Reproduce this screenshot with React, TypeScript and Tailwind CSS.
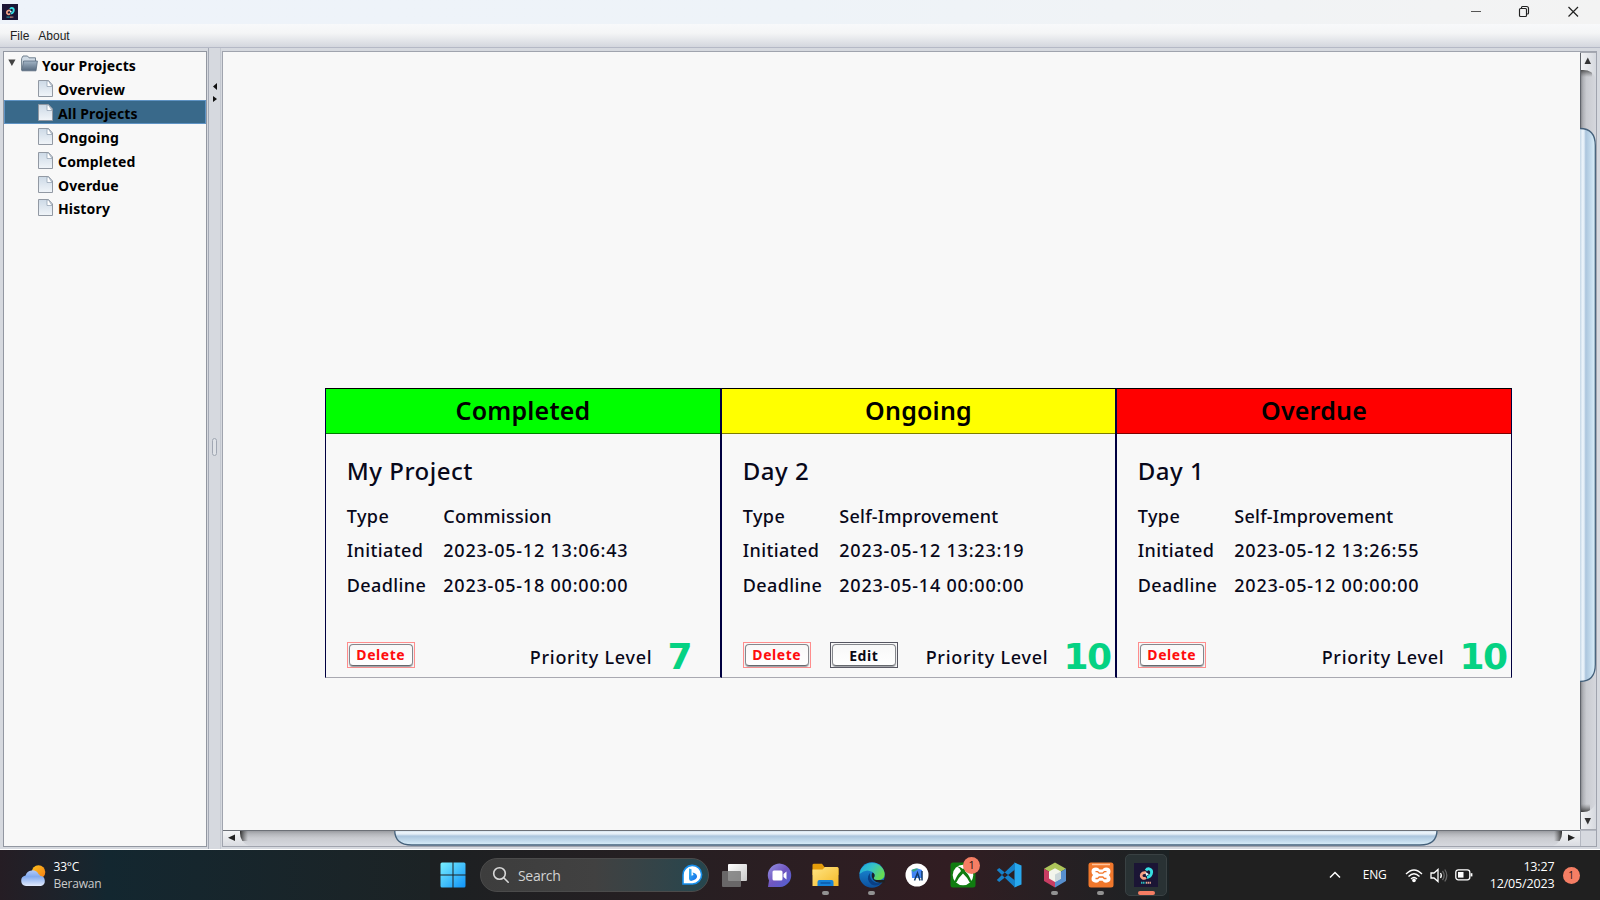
import type { ReactNode } from 'react';

const treeItems = ['Overview', 'All Projects', 'Ongoing', 'Completed', 'Overdue', 'History'];

type Project = {
  status: string;
  header: string;
  name: string;
  type: string;
  initiated: string;
  deadline: string;
  level: number;
  editable?: boolean;
  frame: string;
};

const projects: Project[] = [
  { status: 'Completed', header: 'bg-[#00ff00] border-[#007d00]', name: 'My Project', type: 'Commission', initiated: '2023-05-12 13:06:43', deadline: '2023-05-18 00:00:00', level: 7, frame: 'w-[397px] border-l border-r-2' },
  { status: 'Ongoing', header: 'bg-[#ffff00] border-[#7d7d00]', name: 'Day 2', type: 'Self-Improvement', initiated: '2023-05-12 13:23:19', deadline: '2023-05-14 00:00:00', level: 10, editable: true, frame: 'w-[395px] border-r-2' },
  { status: 'Overdue', header: 'bg-[#ff0000] border-[#7d0000]', name: 'Day 1', type: 'Self-Improvement', initiated: '2023-05-12 13:26:55', deadline: '2023-05-12 00:00:00', level: 10, frame: 'w-[395px] border-r' },
];

function AppLogo({ size }: { size: number }) {
  return (
    <svg width={size} height={size} viewBox="0 0 24 24" className="block shrink-0">
      <rect width="24" height="24" fill="#1b1535" />
      <path d="M12 7.500q1.500-2.500 4-1.300Q18.500 7.500 17.300 11q-1.200 3-4.300 3.500" fill="none" stroke="#36dfe3" strokeWidth="2.800" />
      <path d="M12 9.800q-3-.8-4.500 1.500-1 2.300 1 3.700 1.800 1 3.500-.3" fill="none" stroke="#f7a184" strokeWidth="2.600" />
      <path d="M11.500 9l3.500 2.300-3 1.700z" fill="#e9fbfb" />
      <path d="M7 19.700h4.500" stroke="#2bb9bd" strokeWidth="2" strokeDasharray="1.300 .5" />
      <path d="M12 19.700h5.300" stroke="#e8a28f" strokeWidth="2" strokeDasharray="1.300 .5" />
    </svg>
  );
}

function TitleBar() {
  return (
    <header className="flex h-6 shrink-0 items-center bg-linear-to-r from-[#eef3fa] via-[#eef3f8] to-[#f3f3f3] pl-0.5">
      <AppLogo size={16} />
      <svg width="110" height="16" viewBox="0 0 110 16" className="mr-[20px] ml-auto" fill="none" stroke="#222" strokeWidth="1">
        <path d="M1 7.500h10" stroke="#555" />
        <path d="M49.500 5.500q0-1 1-1h5q1 0 1 1v6q0 1-1 1h-5q-1 0-1-1zM51.500 4.300V3.500q0-1 1-1h4q2 0 2 2v4.500q0 1-1 1h-.7" strokeWidth="1.150" />
        <path d="M98.500 3l9.500 9.500M108 3l-9.500 9.500" strokeWidth="1.200" />
      </svg>
    </header>
  );
}

function FileIcon() {
  return (
    <svg width="16" height="18" viewBox="0 0 16 18" className="mt-[2px] block shrink-0">
      <defs>
        <linearGradient id="page" x1="0" y1="0" x2="0" y2="1">
          <stop offset="0" stopColor="#ccd9e6" />
          <stop offset="1" stopColor="#f1f5f9" />
        </linearGradient>
      </defs>
      <path d="M.5.5h10l4 4.500v11.500H.5z" fill="url(#page)" stroke="#9299a3" />
      <path d="M9 1v5.500h5l-3.500-5.500z" fill="#fff" stroke="#98a6b6" strokeWidth=".8" />
    </svg>
  );
}

function Sidebar() {
  return (
    <nav className="h-[796px] w-[204px] shrink-0 border border-[#9297a1] bg-[#f8f8f8] pt-px text-[14px] font-bold text-black">
      <div className="flex h-[23px] items-center pl-[4px]">
        <svg width="8" height="8" viewBox="0 0 8 8" className="mb-1"><path d="M.3.5h7.200L3.900 7z" fill="#444" /></svg>
        <svg width="17" height="17" viewBox="0 0 17 17" className="mb-0.5 ml-[5px]">
          <defs>
            <linearGradient id="folder" x1="0" y1="0" x2="0" y2="1">
              <stop offset="0" stopColor="#a3b5c6" />
              <stop offset="1" stopColor="#56697e" />
            </linearGradient>
          </defs>
          <path d="M.6 15V3.500L2 1h4.500L8 2.800h6.500V6" fill="#cfdae4" stroke="#71808f" />
          <path d="M2.600 6h13.800l-1.400 9.800H.8z" fill="url(#folder)" stroke="#596b7d" strokeWidth=".8" />
        </svg>
        <span className="mt-0.5 ml-[4px] tracking-[0.150px]">Your Projects</span>
      </div>
      {treeItems.map((item) => (
        <div
          key={item}
          className={`flex h-[23.9px] items-center border pl-[33px] ${item === 'All Projects' ? 'border-[#5f93c4] bg-[#39698a]' : 'border-transparent'}`}
        >
          <FileIcon />
          <span className="mt-[3px] ml-[4px] tracking-[0.150px]">{item}</span>
        </div>
      ))}
    </nav>
  );
}

function Divider() {
  return (
    <div className="flex w-[13px] shrink-0 flex-col items-center border-x border-l-[#a4a9b5] border-r-[#c4c8d0] bg-[#d6d9df] pt-[35px]">
      <svg width="6" height="22" viewBox="0 0 6 22"><path d="M5 0v7L1 3.500zM1 13v6l4-3z" fill="#111" /></svg>
      <div className="mt-[333px] h-[18px] w-[5px] rounded-sm border border-[#a1a7b3] bg-[#dfe2e7]" />
    </div>
  );
}

function VerticalScroll() {
  return (
    <svg width="16" height="778" viewBox="0 0 16 778" className="block shrink-0">
      <defs>
        <linearGradient id="vtrack"><stop offset="0" stopColor="#77797d" /><stop offset=".18" stopColor="#aeb0b5" /><stop offset=".4" stopColor="#c9cbd0" /><stop offset="1" stopColor="#d5d7dd" /></linearGradient>
        <linearGradient id="vthumb" gradientUnits="userSpaceOnUse" x1="0" y1="0" x2="16" y2="0"><stop offset="0" stopColor="#c5d6e5" /><stop offset=".15" stopColor="#eaf3fa" /><stop offset=".25" stopColor="#e4eef7" /><stop offset=".36" stopColor="#abc5dd" /><stop offset=".7" stopColor="#c5ddee" /><stop offset="1" stopColor="#dff3fc" /></linearGradient>
        <linearGradient id="btn"><stop offset="0" stopColor="#f4f5f6" /><stop offset="1" stopColor="#d6d9df" /></linearGradient>
        <linearGradient id="vshade" x1="0" y1="0" x2="0" y2="1"><stop offset="0" stopColor="#222" stopOpacity=".8" /><stop offset="1" stopColor="#555" stopOpacity="0" /></linearGradient>
      </defs>
      <rect width="16" height="778" fill="url(#vtrack)" />
      <rect y="17" width="12" height="8" fill="url(#vshade)" />
      <path d="M0 0h16v27Q13 18 3 18H0z" fill="url(#btn)" />
      <path d="M4.500 12h6.500L7.800 5.500z" fill="#333" />
      <path d="M-8 76.500H0q15.300 0 15.300 17v519q0 17-15.300 17h-8z" fill="url(#vthumb)" stroke="#45617b" strokeWidth="1.300" />
      <rect y="753" width="10" height="8" fill="url(#vshade)" transform="matrix(1 0 0 -1 0 1513)" />
      <path d="M0 778h16v-27q-4 9-13 9H0z" fill="url(#btn)" />
      <path d="M4.500 766h6.500l-3.200 6.500z" fill="#333" />
      <path d="M.5 0v76M.5 630v148" stroke="#60646b" />
      <path d="M0 .5h16M0 777.500h16" stroke="#a6a9b1" />
    </svg>
  );
}

function HorizontalScroll() {
  return (
    <svg width="1357" height="16" viewBox="0 0 1357 16" className="block shrink-0">
      <defs>
        <linearGradient id="htrack" x1="0" y1="0" x2="0" y2="1"><stop offset="0" stopColor="#909297" /><stop offset=".25" stopColor="#b4b6bb" /><stop offset=".5" stopColor="#c9cbd0" /><stop offset="1" stopColor="#d6d8de" /></linearGradient>
        <linearGradient id="hthumb" gradientUnits="userSpaceOnUse" x1="0" y1="0" x2="0" y2="16"><stop offset="0" stopColor="#c5d6e5" /><stop offset=".15" stopColor="#eaf3fa" /><stop offset=".25" stopColor="#e4eef7" /><stop offset=".38" stopColor="#abc5dd" /><stop offset=".7" stopColor="#c5ddee" /><stop offset="1" stopColor="#dff3fc" /></linearGradient>
        <linearGradient id="hbtn" x1="0" y1="0" x2="0" y2="1"><stop offset="0" stopColor="#f6f7f8" /><stop offset="1" stopColor="#dadce1" /></linearGradient>
        <linearGradient id="lshade"><stop offset="0" stopColor="#222" stopOpacity=".9" /><stop offset="1" stopColor="#555" stopOpacity="0" /></linearGradient>
        <linearGradient id="rshade" x1="1" x2="0"><stop offset="0" stopColor="#222" stopOpacity=".9" /><stop offset="1" stopColor="#555" stopOpacity="0" /></linearGradient>
      </defs>
      <rect width="1357" height="16" fill="url(#htrack)" />
      <rect x="17" width="8" height="11" fill="url(#lshade)" />
      <path d="M0 0h17v3q0 9 9 13H0z" fill="url(#hbtn)" />
      <path d="M12 4.500v6.500L5 7.800z" fill="#222" />
      <path d="M171.700-8V0q0 15 17 15H1197q17 0 17-15v-8z" fill="url(#hthumb)" stroke="#45617b" strokeWidth="1.300" />
      <rect x="1331" width="8" height="11" fill="url(#rshade)" />
      <path d="M1357 0h-18v3q0 9-9 13h27z" fill="url(#hbtn)" />
      <path d="M1345 4.500v6.500l7-3.200z" fill="#222" />
      <path d="M0 .5h1357" stroke="#6c7077" />
    </svg>
  );
}

function ActionButton({ label, danger }: { label: string; danger?: boolean }) {
  return (
    <div className={`h-[26px] w-[68px] border p-px ${danger ? 'border-[#ff8d8d]' : 'border-[#565661]'}`}>
      <button
        type="button"
        className={`block h-[22px] w-full rounded-[4px] border border-[#85878c] border-b-[#66696e] bg-linear-to-b from-[#f8f8f8] to-white pb-px text-[14px] leading-[19px] font-bold tracking-[0.550px] shadow-[0_1px_1px_#9a9ca1] ${danger ? 'text-[#ff0d0d]' : 'pt-px text-[#0a0a14]'}`}
      >
        {label}
      </button>
    </div>
  );
}

function Field({ label, value }: { label: string; value: string }) {
  const numeric = value.startsWith('2');
  return (
    <div className="flex h-[34.500px] items-center text-[18px] font-medium text-[#08081a]">
      <span className="w-[96.500px] tracking-[0.400px]">{label}</span>
      <span className={numeric ? 'tracking-[0.780px]' : 'tracking-[0.250px]'}>{value}</span>
    </div>
  );
}

function ProjectCard({ project }: { project: Project }) {
  return (
    <article className={`flex h-[290px] shrink-0 flex-col border-t border-b border-x-[#000040] border-t-black border-b-[#a9a9b1] ${project.frame}`}>
      <h2 className={`flex h-[45px] items-center justify-center border-b text-[25px] font-semibold tracking-[0.200px] text-black ${project.header}`}>
        {project.status}
      </h2>
      <div className="flex flex-1 flex-col pl-[20.800px]">
        <h3 className="mt-[19px] h-[36px] text-[24px] leading-[36px] font-medium tracking-[0.500px] text-[#08081a]">{project.name}</h3>
        <div className="mt-[10px]">
          <Field label="Type" value={project.type} />
          <Field label="Initiated" value={project.initiated} />
          <Field label="Deadline" value={project.deadline} />
        </div>
        <div className="mt-[39px] flex items-start">
          <ActionButton label="Delete" danger />
          {project.editable && <div className="ml-[19px]"><ActionButton label="Edit" /></div>}
          <div className={`ml-auto flex items-center ${project.level > 9 ? 'pr-[4.500px]' : 'pr-[29px]'}`}>
            <span className="text-[18px] leading-[28px] font-medium tracking-[0.750px] text-[#08081a]">Priority Level</span>
            <span className="ml-[15px] font-['DejaVu_Sans'] text-[36px] leading-[30px] font-bold tracking-[-1.500px] text-[#05d283]">{project.level}</span>
          </div>
        </div>
      </div>
    </article>
  );
}

function Slot({ children, running }: { children: ReactNode; running?: boolean }) {
  return (
    <div className="relative flex h-[50px] w-[45.8px] shrink-0 items-center justify-center">
      {children}
      {running && <span className="absolute bottom-[5px] h-[4px] w-[7px] rounded-full bg-[#929292]" />}
    </div>
  );
}

function Taskbar() {
  return (
    <footer className="flex h-[50px] shrink-0 items-center bg-[#202020] font-['Open_Sans','Noto_Sans',sans-serif] text-white">
      <div className="flex h-full w-[430.3px] shrink-0 items-center bg-linear-to-r from-[#251d24] via-[#132730] via-25% to-[#1c2325] pl-5">
        <svg width="27" height="23" viewBox="0 0 27 23">
          <defs>
            <linearGradient id="cloud" x1="0" y1="0" x2="0" y2="1"><stop offset="0" stopColor="#b1c9f9" /><stop offset=".4" stopColor="#83abf0" /><stop offset="1" stopColor="#e3ebfc" /></linearGradient>
            <linearGradient id="sun" x1="0" y1="0" x2="1" y2="1"><stop offset="0" stopColor="#ffc21c" /><stop offset="1" stopColor="#f37b17" /></linearGradient>
          </defs>
          <circle cx="18.500" cy="8" r="6.800" fill="url(#sun)" />
          <path d="M6 22a5.300 5.300 0 0 1-.4-10.500A7 7 0 0 1 18.500 10q1.300.7 1.500 1.800A5.200 5.200 0 0 1 21 22z" fill="url(#cloud)" />
        </svg>
        <div className="ml-[6.500px] text-[12px] leading-[17px]">
          <div className="tracking-[-0.200px]">33°C</div>
          <div className="tracking-[-0.200px] text-[#cacaca]">Berawan</div>
        </div>
      </div>
      <div className="flex h-full shrink-0 items-center bg-linear-to-r from-[#1c2022] via-[#311d22] via-70% to-[#1b2224]">
        <Slot>
          <svg width="26" height="26" viewBox="0 0 26 26">
            <defs><linearGradient id="win" gradientUnits="userSpaceOnUse" x1="0" y1="0" x2="26" y2="26"><stop offset="0" stopColor="#7bf1ff" /><stop offset="1" stopColor="#0d91f8" /></linearGradient></defs>
            <path d="M2 .5h10.500v12H.5V2Q.5.500 2 .5zM13.500.5H24q1.500 0 1.500 1.500v10.500h-12zM.5 13.500h12v12H2q-1.500 0-1.500-1.500zM13.500 13.500h12V24q0 1.500-1.500 1.500H13.500z" fill="url(#win)" />
          </svg>
        </Slot>
        <div className="mr-[2.3px] ml-[3.9px] flex h-[34px] w-[229px] items-center rounded-full border border-[#4b4b4b] bg-linear-to-r from-[#3d3d3d] via-[#414141] to-[#25464e] pr-[4px] pl-[11px]">
          <svg width="18" height="18" viewBox="0 0 18 18" fill="none" stroke="#d8d8d8" strokeWidth="1.600"><circle cx="7.500" cy="7.500" r="5.800" /><path d="M11.700 11.700l4.500 4.500" strokeLinecap="round" /></svg>
          <span className="ml-[8px] text-[14px] tracking-[-0.300px] text-[#d2d2d2]">Search</span>
          <svg width="24" height="24" viewBox="0 0 24 24" className="ml-auto">
            <defs><linearGradient id="bing" x1="0" y1="0" x2="1" y2="1"><stop offset="0" stopColor="#39baf3" /><stop offset="1" stopColor="#126ae8" /></linearGradient></defs>
            <path d="M3 21V12A9.300 9.300 0 1 1 12.500 21z" fill="#fff" stroke="#168fec" strokeWidth="1.600" />
            <path d="M9 5.500l2.500.8v6.500l2-.9-1-2.300q4 .8 4.500 3.400.3 2.500-3 4L11 18q-2-.5-2-2.500z" fill="url(#bing)" />
          </svg>
        </div>
        <Slot>
          <svg width="27" height="25" viewBox="0 0 27 25"><defs><linearGradient id="tv" x1="0" y1="0" x2="1" y2="1"><stop offset="0" stopColor="#fff" /><stop offset="1" stopColor="#c9c9c9" /></linearGradient></defs><rect x="7" y="1" width="19" height="17" rx="1" fill="url(#tv)" /><rect x="1" y="8" width="19" height="16" rx="1" fill="#777" fillOpacity=".82" /></svg>
        </Slot>
        <Slot>
          <svg width="25" height="25" viewBox="0 0 25 25"><defs><linearGradient id="chat" x1="0" y1="0" x2="1" y2="1"><stop offset="0" stopColor="#9694e3" /><stop offset=".5" stopColor="#7056c0" /><stop offset="1" stopColor="#4d62d4" /></linearGradient></defs><path d="M1 24l1-6.500A11.700 11.700 0 1 1 13 24z" fill="url(#chat)" /><rect x="5.500" y="7.500" width="10" height="10" rx="1.500" fill="#fff" /><path d="M16.500 11l3-2.500v8l-3-2.500z" fill="#fff" /></svg>
        </Slot>
        <Slot running>
          <svg width="27" height="24" viewBox="0 0 27 24"><defs><linearGradient id="fold" x1="0" y1="0" x2="1" y2="1"><stop offset="0" stopColor="#ffe584" /><stop offset="1" stopColor="#f5b927" /></linearGradient></defs><path d="M.5 2Q.5.800 2 .8h8L12.500 4H25q1.500 0 1.500 1.500V12H.5z" fill="#e49c0a" /><path d="M.5 6.500h10L13 4h12q1.500 0 1.500 1.500V23H.5z" fill="url(#fold)" /><path d="M5.500 23v-4q0-2 2-2h12q2 0 2 2v4z" fill="#1683d8" /><path d="M8.500 20h10" stroke="#0c58a8" strokeWidth="1.500" /></svg>
        </Slot>
        <Slot running>
          <svg width="26" height="26" viewBox="0 0 26 26"><defs><linearGradient id="edgeTop" x1="0" y1="0" x2="1" y2=".5"><stop offset="0" stopColor="#1ba8df" /><stop offset=".5" stopColor="#35c1c8" /><stop offset="1" stopColor="#66dc52" /></linearGradient><linearGradient id="edgeLow" x1="0" y1="0" x2="0" y2="1"><stop offset="0" stopColor="#1c95df" /><stop offset="1" stopColor="#0c509d" /></linearGradient></defs><circle cx="13" cy="13" r="12.700" fill="url(#edgeLow)" /><path d="M.5 12A12.700 12.700 0 0 1 25.700 12q0 6-7 6-4.700-.2-3.700-2.500 2-3-1.500-5.500Q7 6 .5 12z" fill="url(#edgeTop)" /><path d="M11 11q-5 6 1.500 11.500 6 3 11-2.500-4 2-7.500.5Q10 17.500 11 11z" fill="#0a3f84" /><path d="M13.500 10.500q3.500 2 1.300 5.300-.6 1.800 2.200 2.200h8.700v2.500h-3q-5 1-8.200-2.500-3-4-1-7.500z" fill="#1e2022" /></svg>
        </Slot>
        <Slot>
          <svg width="24" height="24" viewBox="0 0 24 24"><circle cx="12" cy="12" r="11.500" fill="#fff" /><path d="M6.500 7q5-3 10.500 0v8h-10z" fill="#4285f4" /><path d="M6.500 7q3.500-2.200 7-1.300L8.500 9z" fill="#3ba67c" /><path d="M9.500 17.500l3-7.500 2.500 7.500M17 8v9.500" fill="none" stroke="#123a68" strokeWidth="1.500" /></svg>
        </Slot>
        <Slot>
          <svg width="26" height="26" viewBox="0 0 26 26"><rect x=".5" y=".5" width="25" height="25" rx="2.500" fill="#107c10" /><circle cx="13" cy="13" r="10.300" fill="#fff" /><path d="M7 4.500q3-.5 6 2.500 3-3 6-2.500-3 1-4 4.500 5 5 6.500 11l-1.500 1Q17 15 13 11.500 9 15 6 21l-1.500-1Q6 14 11 9 10 5.500 7 4.500z" fill="#107c10" /></svg>
          <span className="absolute top-[7px] left-[23px] flex size-[17px] items-center justify-center rounded-full bg-[#f57e64] text-[11px] text-[#1e1513]">1</span>
        </Slot>
        <Slot>
          <svg width="26" height="26" viewBox="0 0 26 26"><path d="M18.500.5L25.500 3.500v19l-7 3z" fill="#28a8ee" /><path d="M.8 8l2.400-2L19 18.500v7zM.8 18l2.400 2L19 7.500v-7z" fill="#1681c9" /></svg>
        </Slot>
        <Slot running>
          <svg width="24" height="26" viewBox="0 0 24 26"><path d="M12 .5l11 6.300L12 13 1 6.800z" fill="#adc55a" /><path d="M1 6.800L12 13v12.500L1 19z" fill="#c83d63" /><path d="M23 6.800L12 13v12.500L23 19z" fill="#578fce" /><path d="M12 6.200l6 3.200v7.200l-6 3.500-6-3.500V9.400z" fill="#f3f5ec" /><path d="M12 12.500l6-3v7.200l-6 3.400z" fill="#ccd7da" /></svg>
        </Slot>
        <Slot running>
          <svg width="26" height="26" viewBox="0 0 26 26">
            <rect x=".5" y=".5" width="25" height="25" rx="2.500" fill="#f1782c" />
            <path d="M4 2.500h18" stroke="#ffc299" strokeWidth="1.500" />
            <path d="M8 5.500q2.500 0 3.500 2h3q1-2 3.500-2 4.500.2 4.500 4 0 2-1.500 3.500 1.500 1.500 1.500 3.800 0 3.700-4.500 3.900-2.500 0-3.500-2h-3q-1 2-3.500 2-4.500-.2-4.500-3.900 0-2.300 1.500-3.800-1.500-1.500-1.500-3.500 0-3.800 4.500-4z" fill="#fff" />
            <path d="M7.500 9.700h2.200l1.500 1.500h3.600l1.500-1.500h2.200M7.500 16.500h2.200l1.500-1.500h3.600l1.500 1.500h2.200" fill="none" stroke="#f1782c" strokeWidth="1.300" />
          </svg>
        </Slot>
        <Slot>
          <div className="flex size-[42px] items-center justify-center rounded-[5px] border border-[#394143] bg-[#293234]"><AppLogo size={24} /></div>
          <span className="absolute bottom-[5px] h-[4px] w-[17px] rounded-full bg-[#f57e64]" />
        </Slot>
      </div>
      <div className="ml-auto flex h-full items-center pr-[20.500px]">
        <svg width="12" height="8" viewBox="0 0 12 8" fill="none" stroke="#fff" strokeWidth="1.500"><path d="M1 6.500l5-5 5 5" /></svg>
        <span className="ml-[22px] text-[12px] tracking-[-0.200px]">ENG</span>
        <svg width="18" height="15" viewBox="0 0 18 15" className="ml-[18px]" fill="none" stroke="#fff" strokeWidth="1.300"><path d="M1 6q8-8 16 0M3.500 8.500q5.500-5.500 11 0M6 11q3-3 6 0" /><circle cx="9" cy="12.300" r="1.200" fill="#fff" /></svg>
        <svg width="18" height="15" viewBox="0 0 18 15" className="ml-[7px]" fill="none" stroke="#fff" strokeWidth="1.300"><path d="M1 5h3l4-3.500v12L4 10H1z" /><path d="M10.500 5q1.700 2.500 0 5" /><path d="M12.500 3q3.300 4.500 0 9M14.800 1.500q4 6 0 12" stroke="#666" /></svg>
        <svg width="18" height="12" viewBox="0 0 18 12" className="ml-[7px]" fill="none" stroke="#fff" strokeWidth="1.300"><rect x=".8" y=".8" width="14" height="10" rx="2.500" /><path d="M3 3h5.500v5.600H3z" fill="#fff" stroke="none" /><path d="M16.500 4.200v3.200" strokeWidth="1.800" /></svg>
        <div className="ml-[16px] w-[66px] text-right text-[12.500px] leading-[17px] tracking-[-0.150px] whitespace-nowrap">
          <div>13:27</div>
          <div>12/05/2023</div>
        </div>
        <span className="ml-[8px] flex size-[17px] items-center justify-center rounded-full bg-[#f57e64] text-[10px] text-[#1e1513]">1</span>
      </div>
    </footer>
  );
}

export default function App() {
  return (
    <div className="flex h-[900px] w-[1600px] flex-col overflow-hidden bg-[#d6d9df] font-['Noto_Sans','Open_Sans',sans-serif]">
      <TitleBar />
      <div className="flex h-[24px] shrink-0 items-center gap-[9px] border-b border-[#b5b9c6] bg-linear-to-b from-[#f8f9fb] via-[#f4f5f6] via-40% to-[#d4d7de] pt-px pl-[10px] font-['Liberation_Sans',sans-serif] text-[12px] text-[#222]">
        <span>File</span>
        <span>About</span>
      </div>
      <main className="flex h-[802px] shrink-0 border-b border-white">
        <div className="pt-[3px] pr-px pl-[3px]"><Sidebar /></div>
        <Divider />
        <div className="mt-[3px] ml-px h-[796px] w-[1375px] border border-[#a0a4ae]">
          <div className="flex h-[778px]">
            <section className="flex w-[1357px] shrink-0 items-start bg-[#f8f8f8] pt-[336px] pl-[102px]">
              {projects.map((project) => <ProjectCard key={project.name} project={project} />)}
            </section>
            <VerticalScroll />
          </div>
          <div className="flex h-[16px]">
            <HorizontalScroll />
            <div className="w-[16px] border-t border-l border-[#b4b8c1]" />
          </div>
        </div>
      </main>
      <Taskbar />
    </div>
  );
}
